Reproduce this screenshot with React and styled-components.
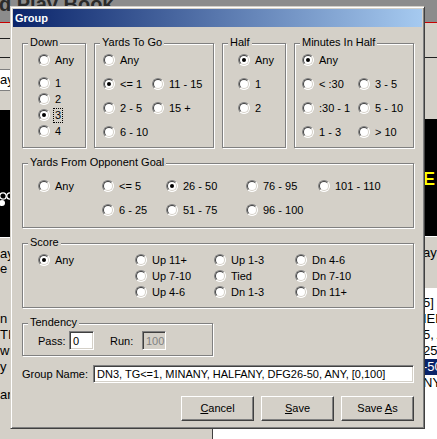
import React from "react";
import styled, { createGlobalStyle } from "styled-components";

const GlobalStyle = createGlobalStyle`
  html, body {
    margin: 0;
    padding: 0;
  }
  body {
    width: 437px;
    height: 439px;
    overflow: hidden;
    background: #d4d0c8;
    font-family: "Liberation Sans", Arial, sans-serif;
    font-size: 11px;
    color: #000;
  }
`;

/* ---------- background application ---------- */

const Desktop = styled.div`
  position: relative;
  width: 437px;
  height: 439px;
  overflow: hidden;
  display: flex;
  flex-direction: column;
  background: #d4d0c8;
`;

const Banner = styled.div`
  height: 22px;
  flex: none;
  background: #8c8c8c;
  border-bottom: 1px solid #c80000;
  overflow: hidden;
`;

const BannerTitle = styled.div`
  font: bold 20px "Liberation Sans", Arial, sans-serif;
  line-height: 20px;
  color: #2a2a2a;
  margin: -6px 0 0 -1px;
  white-space: nowrap;
`;

const Workspace = styled.div`
  flex: 1;
  display: flex;
`;

const Pane = styled.div`
  width: ${(p) => p.$w || "auto"};
  flex: ${(p) => (p.$w ? "none" : "1")};
  display: flex;
  flex-direction: column;
  border-right: ${(p) => (p.$divider ? "1px solid #404040" : "none")};
  overflow: hidden;
`;

const Strip = styled.div`
  height: ${(p) => p.$h}px;
  flex: none;
  border-bottom: ${(p) => (p.$line ? "1px solid #202020" : "none")};
`;

const Field = styled.div`
  height: ${(p) => p.$h}px;
  flex: none;
  background: #000;
  border-bottom: 1px solid #fff;
  padding-left: ${(p) => p.$indent || 0}px;
  overflow: hidden;
`;

const FieldWord = styled.div`
  font: bold 18px "Liberation Sans", Arial, sans-serif;
  color: #ffff00;
  margin-top: ${(p) => p.$top}px;
`;

const EditLine = styled.div`
  height: 20px;
  flex: none;
  background: #fff;
  border-top: 1px solid #808080;
  border-bottom: 1px solid #808080;
  line-height: 20px;
  font-size: 13px;
  overflow: hidden;
  white-space: nowrap;
`;

const Fragment = styled.div`
  height: ${(p) => p.$h || 16}px;
  line-height: ${(p) => p.$h || 16}px;
  font-size: 13px;
  white-space: nowrap;
  padding-left: ${(p) => p.$indent || 0}px;
  background: ${(p) => (p.$selected ? "#0a246a" : "transparent")};
  color: ${(p) => (p.$selected ? "#fff" : "#000")};
`;

const ListBox = styled.div`
  flex: 1;
  background: #fff;
  padding-top: 7px;
`;

/* ---------- dialog ---------- */

const Dialog = styled.div`
  position: absolute;
  left: 10px;
  top: 6px;
  width: 415px;
  height: 423px;
  box-sizing: border-box;
  background: #d4d0c8;
  border: 1px solid;
  border-color: #d4d0c8 #404040 #404040 #d4d0c8;
  box-shadow: inset 1px 1px 0 #fff, inset -1px -1px 0 #808080;
  padding: 2px;
  display: flex;
  flex-direction: column;
`;

const TitleBar = styled.div`
  height: 18px;
  flex: none;
  display: flex;
  align-items: center;
  padding-left: 2px;
  background: linear-gradient(to right, #0a246a, #a6caf0);
  color: #fff;
  font-weight: bold;
  font-size: 11px;
`;

const Body = styled.div`
  flex: 1;
  display: flex;
  flex-direction: column;
  padding: 16px 8px 0 9px;
`;

const Row = styled.div`
  display: grid;
  grid-template-columns: ${(p) => p.$cols};
  column-gap: 8px;
  margin-top: ${(p) => p.$mt || 0}px;
`;

const GroupBox = styled.div`
  position: relative;
  box-sizing: border-box;
  height: ${(p) => p.$h}px;
  width: ${(p) => (p.$w ? `${p.$w}px` : "auto")};
  border: 1px solid #808080;
  box-shadow: inset 1px 1px 0 #fff, 1px 1px 0 #fff;
  margin-top: ${(p) => p.$mt || 0}px;
  padding: ${(p) => p.$pad};
`;

const Legend = styled.span`
  position: absolute;
  top: -8px;
  left: 5px;
  padding: 0 2px;
  line-height: 13px;
  background: #d4d0c8;
  white-space: nowrap;
`;

const OptionGrid = styled.div`
  display: grid;
  grid-template-columns: ${(p) => p.$cols || "auto"};
  grid-template-rows: ${(p) => p.$rows};
  row-gap: ${(p) => p.$gap || 0}px;
`;

const Option = styled.label`
  display: flex;
  align-items: center;
  gap: 5px;
  height: 16px;
  white-space: nowrap;
  grid-column: ${(p) => p.$col || "auto"};
  grid-row: ${(p) => p.$row || "auto"};
`;

const Circle = styled.span`
  position: relative;
  flex: none;
  width: 12px;
  height: 12px;
  box-sizing: border-box;
  border-radius: 50%;
  border: 1px solid;
  border-color: #808080 #fff #fff #808080;
  background: #fff;

  &::before {
    content: "";
    position: absolute;
    inset: 0;
    border-radius: 50%;
    border: 1px solid;
    border-color: #404040 #d4d0c8 #d4d0c8 #404040;
  }

  &::after {
    content: "";
    display: ${(p) => (p.$on ? "block" : "none")};
    position: absolute;
    left: 3px;
    top: 3px;
    width: 4px;
    height: 4px;
    border-radius: 50%;
    background: #000;
  }
`;

const Caption = styled.span`
  outline: ${(p) => (p.$focus ? "1px dotted #000" : "none")};
  outline-offset: 0;
  padding: 0 ${(p) => (p.$focus ? "1px" : "0")};
  margin-left: ${(p) => (p.$focus ? "-1px" : "0")};
  line-height: 13px;
`;

const Radio = ({ label, on, focus, col, row }) => (
  <Option $col={col} $row={row}>
    <Circle $on={on} />
    <Caption $focus={focus}>{label}</Caption>
  </Option>
);

const FieldRow = styled.div`
  display: flex;
  align-items: center;
  margin-top: ${(p) => p.$mt || 0}px;
`;

const FieldLabel = styled.span`
  width: ${(p) => p.$w}px;
  margin-left: ${(p) => p.$ml || 0}px;
  flex: none;
  white-space: nowrap;
`;

const TextBox = styled.div`
  box-sizing: border-box;
  width: ${(p) => p.$w}px;
  height: ${(p) => p.$h}px;
  flex: none;
  border: 1px solid;
  border-color: #808080 #fff #fff #808080;
  box-shadow: inset 1px 1px 0 #404040, inset -1px -1px 0 #d4d0c8;
  background: ${(p) => (p.$disabled ? "#d4d0c8" : "#fff")};
  color: ${(p) => (p.$disabled ? "#808080" : "#000")};
  padding: 0 3px;
  display: flex;
  align-items: center;
  white-space: nowrap;
  overflow: hidden;
`;

const ButtonRow = styled.div`
  display: flex;
  justify-content: flex-end;
  gap: 7px;
  margin-top: 13px;
`;

const Button = styled.div`
  box-sizing: border-box;
  width: 73px;
  height: 25px;
  border: 1px solid;
  border-color: #fff #404040 #404040 #fff;
  box-shadow: inset -1px -1px 0 #808080, inset 1px 1px 0 #d4d0c8;
  display: flex;
  align-items: center;
  justify-content: center;
  padding-bottom: 1px;

  u {
    text-decoration: underline;
    text-underline-offset: 1px;
  }
`;

const App = () => (
  <>
    <GlobalStyle />
    <Desktop>
      <Banner>
        <BannerTitle>d Play Book</BannerTitle>
      </Banner>
      <Workspace>
        <Pane $w="212px" $divider>
          <Strip $h={15} $line />
          <Strip $h={18} $line />
          <Strip $h={11} />
          <EditLine>ay</EditLine>
          <Strip $h={19} />
          <Field $h={127}>
            <svg width="14" height="127" viewBox="0 0 14 127">
              <circle cx="3" cy="86" r="3.2" fill="none" stroke="#fff" strokeWidth="1.3" />
              <circle cx="10" cy="86" r="3.2" fill="none" stroke="#fff" strokeWidth="1.3" />
              <circle cx="2" cy="93" r="3" fill="#fff" />
            </svg>
          </Field>
          <Strip $h={8} />
          <Fragment $h={15}>ay</Fragment>
          <Fragment $h={15}>e a</Fragment>
          <Strip $h={35} />
          <Fragment>n</Fragment>
          <Fragment>TI</Fragment>
          <Fragment>wi</Fragment>
          <Fragment>y</Fragment>
          <Strip $h={12} />
          <Fragment>ar</Fragment>
        </Pane>
        <Pane>
          <Strip $h={34} $line />
          <Strip $h={61} />
          <Field $h={117} $indent={210}>
            <FieldWord $top={50}>E</FieldWord>
          </Field>
          <Strip $h={8} />
          <Fragment $h={15} $indent={210}>ay</Fragment>
          <Strip $h={28} />
          <ListBox>
            <Fragment $indent={210}>5]</Fragment>
            <Fragment $indent={210}>IED</Fragment>
            <Fragment $indent={210}>5, A</Fragment>
            <Fragment $indent={210}>25,</Fragment>
            <Fragment $indent={210} $selected>-50</Fragment>
            <Fragment $indent={210}>NY.</Fragment>
          </ListBox>
        </Pane>
      </Workspace>

      <Dialog>
        <TitleBar>Group</TitleBar>
        <Body>
          <Row $cols="64px 120px 64px 120px">
            <GroupBox $h={105} $pad="8px 0 0 15px">
              <Legend>Down</Legend>
              <OptionGrid $rows="16px 7px 16px 16px 16px 16px">
                <Radio label="Any" row={1} />
                <Radio label="1" row={3} />
                <Radio label="2" row={4} />
                <Radio label="3" row={5} on focus />
                <Radio label="4" row={6} />
              </OptionGrid>
            </GroupBox>
            <GroupBox $h={105} $pad="8px 0 0 8px">
              <Legend>Yards To Go</Legend>
              <OptionGrid $cols="49px auto" $rows="16px 16px 16px 16px" $gap={8}>
                <Radio label="Any" col={1} row={1} />
                <Radio label="<= 1" col={1} row={2} on />
                <Radio label="11 - 15" col={2} row={2} />
                <Radio label="2 - 5" col={1} row={3} />
                <Radio label="15 +" col={2} row={3} />
                <Radio label="6 - 10" col={1} row={4} />
              </OptionGrid>
            </GroupBox>
            <GroupBox $h={105} $pad="8px 0 0 15px">
              <Legend>Half</Legend>
              <OptionGrid $rows="16px 16px 16px" $gap={8}>
                <Radio label="Any" on />
                <Radio label="1" />
                <Radio label="2" />
              </OptionGrid>
            </GroupBox>
            <GroupBox $h={105} $pad="8px 0 0 7px">
              <Legend>Minutes In Half</Legend>
              <OptionGrid $cols="56px auto" $rows="16px 16px 16px 16px" $gap={8}>
                <Radio label="Any" col={1} row={1} on />
                <Radio label="< :30" col={1} row={2} />
                <Radio label="3 - 5" col={2} row={2} />
                <Radio label=":30 - 1" col={1} row={3} />
                <Radio label="5 - 10" col={2} row={3} />
                <Radio label="1 - 3" col={1} row={4} />
                <Radio label="> 10" col={2} row={4} />
              </OptionGrid>
            </GroupBox>
          </Row>

          <GroupBox $h={65} $mt={15} $pad="14px 0 0 15px">
            <Legend>Yards From Opponent Goal</Legend>
            <OptionGrid $cols="64px 64px 80px 72px auto" $rows="16px 16px" $gap={8}>
              <Radio label="Any" col={1} row={1} />
              <Radio label="<= 5" col={2} row={1} />
              <Radio label="26 - 50" col={3} row={1} on />
              <Radio label="76 - 95" col={4} row={1} />
              <Radio label="101 - 110" col={5} row={1} />
              <Radio label="6 - 25" col={2} row={2} />
              <Radio label="51 - 75" col={3} row={2} />
              <Radio label="96 - 100" col={4} row={2} />
            </OptionGrid>
          </GroupBox>

          <GroupBox $h={65} $mt={15} $pad="8px 0 0 15px">
            <Legend>Score</Legend>
            <OptionGrid $cols="97px 79px 81px auto" $rows="16px 16px 16px">
              <Radio label="Any" col={1} row={1} on />
              <Radio label="Up 11+" col={2} row={1} />
              <Radio label="Up 7-10" col={2} row={2} />
              <Radio label="Up 4-6" col={2} row={3} />
              <Radio label="Up 1-3" col={3} row={1} />
              <Radio label="Tied" col={3} row={2} />
              <Radio label="Dn 1-3" col={3} row={3} />
              <Radio label="Dn 4-6" col={4} row={1} />
              <Radio label="Dn 7-10" col={4} row={2} />
              <Radio label="Dn 11+" col={4} row={3} />
            </OptionGrid>
          </GroupBox>

          <GroupBox $h={33} $w={191} $mt={15} $pad="7px 0 0 15px">
            <Legend>Tendency</Legend>
            <FieldRow>
              <FieldLabel $w={31}>Pass:</FieldLabel>
              <TextBox $w={25} $h={19}>0</TextBox>
              <FieldLabel $w={32} $ml={16}>Run:</FieldLabel>
              <TextBox $w={24} $h={19} $disabled>100</TextBox>
            </FieldRow>
          </GroupBox>

          <FieldRow $mt={9}>
            <FieldLabel $w={71}>Group Name:</FieldLabel>
            <TextBox $w={321} $h={18}>
              DN3, TG&lt;=1, MINANY, HALFANY, DFG26-50, ANY, [0,100]
            </TextBox>
          </FieldRow>

          <ButtonRow>
            <Button>
              <span><u>C</u>ancel</span>
            </Button>
            <Button>
              <span><u>S</u>ave</span>
            </Button>
            <Button>
              <span>Save <u>A</u>s</span>
            </Button>
          </ButtonRow>
        </Body>
      </Dialog>
    </Desktop>
  </>
);

export default App;
